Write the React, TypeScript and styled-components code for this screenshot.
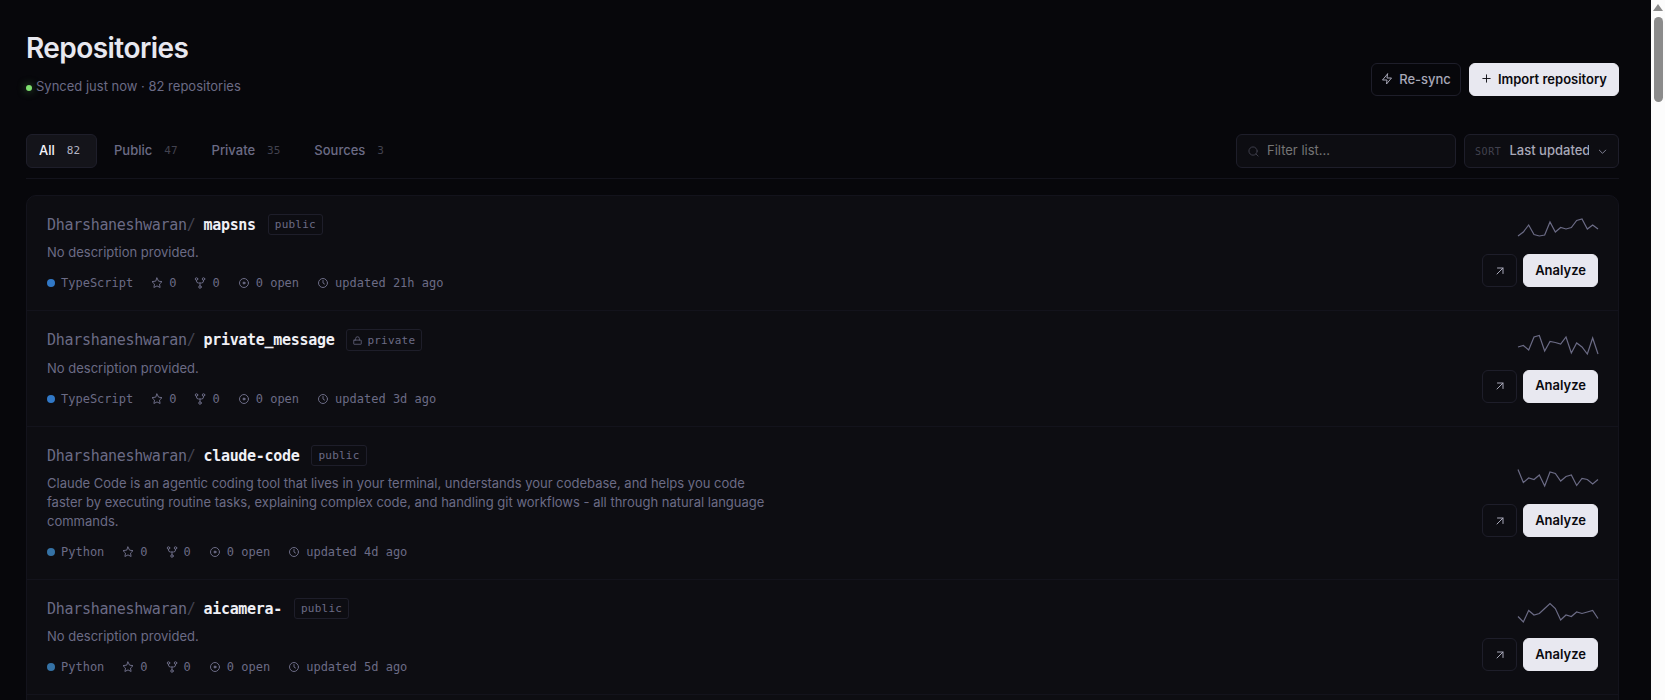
import React from "react";
import styled, { createGlobalStyle, css } from "styled-components";

const sans = `Inter, "Liberation Sans", sans-serif`;
const mono = `"DejaVu Sans Mono", "Liberation Mono", monospace`;

const GlobalStyle = createGlobalStyle`
  *, *::before, *::after { box-sizing: border-box; }
  body { margin: 0; background: #07070b; color: #e8e8f0; font-family: ${sans}; font-size: 13px; }
  button, input, select { font: inherit; margin: 0; }
  h1, h2, p, ul { margin: 0; padding: 0; }
  svg { flex-shrink: 0; }
`;

const Shell = styled.div`
  display: grid;
  grid-template-columns: minmax(0, 1fr) 14px;
  height: 100vh;
  background: #07070b;
`;

const Page = styled.main`
  overflow-y: auto;
  scrollbar-width: none;
  padding: 31px 32px 0 26px;
`;

const ScrollTrack = styled.div`
  display: flex;
  flex-direction: column;
  align-items: center;
  gap: 6px;
  padding-top: 4px;
  background: #fcfcfc;
`;

const ScrollThumb = styled.div`
  width: 9px;
  height: 85px;
  border-radius: 5px;
  background: #8b8b8b;
`;

const Header = styled.header`
  display: flex;
  align-items: flex-end;
  justify-content: space-between;
  margin-bottom: 38px;
`;

const Title = styled.h1`
  font-size: 28px;
  line-height: 34px;
  font-weight: 600;
  letter-spacing: -0.02em;
`;

const SyncStatus = styled.p`
  display: flex;
  align-items: center;
  gap: 4px;
  margin-top: 12px;
  font-size: 13px;
  line-height: 19px;
  color: #6b6b85;
`;

const SyncDot = styled.span`
  width: 6px;
  height: 6px;
  margin-top: 2px;
  border-radius: 50%;
  background: #7ee06f;
  box-shadow: 0 0 8px #7ee06f88;
`;

const Group = styled.div<{ $gap: number }>`
  display: flex;
  align-items: center;
  gap: ${(p) => p.$gap}px;
`;

const Button = styled.button<{ $primary?: boolean }>`
  display: inline-flex;
  align-items: center;
  justify-content: center;
  gap: 6px;
  height: 33px;
  padding: 0 ${(p) => (p.$primary ? 11 : 9)}px 2px;
  border: 1px solid #1e1e2a;
  border-radius: 6px;
  background: transparent;
  color: #a8a8b8;
  font-size: 13px;
  font-weight: 500;
  cursor: pointer;
  ${(p) =>
    p.$primary &&
    css`
      border-color: #e8e8f0;
      background: #e8e8f0;
      color: #0a0a0f;
      font-weight: 600;
    `}
`;

const IconButton = styled(Button)`
  width: 35px;
  padding: 0;
`;

const Toolbar = styled.div`
  display: flex;
  align-items: center;
  justify-content: space-between;
  padding-bottom: 10px;
  border-bottom: 1px solid #13131c;
  margin-bottom: 16px;
`;

const Tab = styled.button<{ $active?: boolean }>`
  display: inline-flex;
  align-items: center;
  gap: 8px;
  height: 34px;
  padding: 0 12px 2px;
  border: 1px solid ${(p) => (p.$active ? "#1e1e2a" : "transparent")};
  border-radius: 6px;
  background: ${(p) => (p.$active ? "#14141a" : "transparent")};
  color: ${(p) => (p.$active ? "#f4f4fa" : "#6b6b85")};
  font-size: 13px;
  font-weight: 500;
  cursor: pointer;
`;

const TabCount = styled.span<{ $active?: boolean }>`
  padding: 0 4px;
  font-family: ${mono};
  font-size: 11px;
  font-weight: 400;
  color: ${(p) => (p.$active ? "#b4b4c4" : "#42424f")};
`;

const Field = styled.label`
  display: flex;
  align-items: center;
  height: 34px;
  padding: 0 11px;
  border: 1px solid #1e1e2a;
  border-radius: 6px;
  background: #0d0d12;
  color: #42424f;
`;

const FilterField = styled(Field)`
  width: 220px;
  gap: 8px;
`;

const FilterInput = styled.input`
  flex: 1;
  min-width: 0;
  padding: 0 0 2px;
  border: 0;
  outline: 0;
  background: transparent;
  color: #e8e8f0;
  font-size: 13px;
  &::placeholder { color: #757575; opacity: 1; }
`;

const SortField = styled(Field)`
  width: 155px;
  gap: 8px;
  padding: 0 10px;
  color: #8a8a9c;
`;

const SortLabel = styled.span`
  font-family: ${mono};
  font-size: 10px;
  letter-spacing: 0.06em;
  color: #42424f;
`;

const SortSelect = styled.select`
  flex: 1;
  min-width: 0;
  padding: 0 0 2px;
  border: 0;
  outline: 0;
  appearance: none;
  background: transparent;
  color: #a8a8b8;
  font-size: 13px;
  font-weight: 500;
`;

const RepoList = styled.ul`
  list-style: none;
  padding-bottom: 24px;
  border: 1px solid #13131c;
  border-radius: 10px 10px 0 0;
  background: #0d0d12;
`;

const RepoRow = styled.li`
  display: flex;
  align-items: center;
  justify-content: space-between;
  gap: 24px;
  padding: 18px 20px;
  border-bottom: 1px solid #13131c;
`;

const RepoHeading = styled.div`
  display: flex;
  align-items: center;
  gap: 12px;
`;

const RepoName = styled.h2`
  font-family: ${mono};
  font-size: 15px;
  line-height: 20px;
  font-weight: 700;
  letter-spacing: -0.02em;
  color: #f0f0f6;
`;

const Owner = styled.span`
  font-weight: 400;
  color: #6b6b85;
`;

const Slash = styled.span`
  margin-right: 8px;
  font-weight: 400;
  color: #42424f;
`;

const Badge = styled.span<{ $private?: boolean }>`
  display: inline-flex;
  align-items: center;
  gap: 5px;
  height: ${(p) => (p.$private ? 22 : 21)}px;
  padding: 0 6px;
  border: 1px solid #1e1e2a;
  border-radius: 3px;
  font-family: ${mono};
  font-size: 11px;
  letter-spacing: 0.02em;
  color: #6b6b85;
`;

const Description = styled.p`
  max-width: 720px;
  margin-top: 8px;
  font-size: 13px;
  line-height: 19px;
  color: #6b6b85;
`;

const Meta = styled.div`
  display: flex;
  align-items: center;
  gap: 18px;
  margin-top: 12px;
  font-family: ${mono};
  font-size: 12px;
  line-height: 18px;
  color: #6b6b85;
`;

const MetaItem = styled.span`
  display: inline-flex;
  align-items: center;
  gap: 6px;
`;

const LanguageDot = styled.span<{ $color: string }>`
  width: 8px;
  height: 8px;
  border-radius: 50%;
  background: ${(p) => p.$color};
`;

const RepoSide = styled.div`
  display: flex;
  flex-direction: column;
  align-items: flex-end;
  gap: 11px;
`;

const SparkSvg = styled.svg`
  display: block;
  overflow: visible;
`;

const iconPaths: Record<string, React.ReactNode> = {
  zap: <path d="M13 2 3 14h9l-1 8 10-12h-9l1-8z" />,
  plus: <path d="M12 4v16M4 12h16" />,
  search: (
    <>
      <circle cx="11" cy="11" r="9" />
      <path d="m22 22-4.500-4.500" />
    </>
  ),
  chevron: <path d="m5 9 7 7 7-7" />,
  star: <path d="M12 2l3.100 6.300 6.900 1-5 4.900 1.200 6.800-6.200-3.200L5.800 21 7 14.200 2 9.300l6.900-1z" />,
  fork: (
    <>
      <circle cx="5" cy="4" r="2.500" />
      <circle cx="19" cy="4" r="2.500" />
      <circle cx="12" cy="20" r="2.500" />
      <path d="M5 6.500v1.500a4 4 0 0 0 4 4h6a4 4 0 0 0 4-4V6.500M12 12v5.500" />
    </>
  ),
  issue: (
    <>
      <circle cx="12" cy="12" r="9" />
      <circle cx="12" cy="12" r="2" fill="currentColor" />
    </>
  ),
  clock: (
    <>
      <circle cx="12" cy="12" r="9" />
      <path d="M12 7v5l3 2" />
    </>
  ),
  lock: (
    <>
      <rect x="2" y="11" width="20" height="11" rx="1" />
      <path d="M7 11V7a5 5 0 0 1 10 0v4" />
    </>
  ),
  arrow: <path d="M6 18 18 6M7 6h11v11" />,
};

function Icon({ name, size }: { name: string; size: number }) {
  return (
    <svg
      width={size}
      height={size}
      viewBox="0 0 24 24"
      fill="none"
      stroke="currentColor"
      strokeWidth={2}
      strokeLinecap="round"
      strokeLinejoin="round"
      overflow="visible"
      aria-hidden="true"
    >
      {iconPaths[name]}
    </svg>
  );
}

function Sparkline({ values }: { values: number[] }) {
  const points = values.map((y, i) => `${(i * 80) / (values.length - 1)},${y}`).join(" ");
  return (
    <SparkSvg width="80" height="24" viewBox="0 0 80 24" aria-hidden="true">
      <polyline points={points} fill="none" stroke="#6b6b85" strokeWidth="1.2" />
    </SparkSvg>
  );
}

interface Repo {
  name: string;
  isPrivate?: boolean;
  description: string;
  language: "TypeScript" | "Python";
  updated: string;
  activity: number[];
}

const languageColors = { TypeScript: "#3178c6", Python: "#3572a5" };

const repos: Repo[] = [
  {
    name: "mapsns",
    description: "No description provided.",
    language: "TypeScript",
    updated: "21h",
    activity: [17, 13, 6, 15.5, 17, 16, 3, 13, 8.5, 10, 8.5, 1.5, 0, 10, 6, 10],
  },
  {
    name: "private_message",
    isPrivate: true,
    description: "No description provided.",
    language: "TypeScript",
    updated: "3d",
    activity: [12, 10.5, 15, 2, 0.5, 16, 6.5, 7.5, 9, 2, 18, 8, 12, 19, 3, 19],
  },
  {
    name: "claude-code",
    description:
      "Claude Code is an agentic coding tool that lives in your terminal, understands your codebase, and helps you code faster by executing routine tasks, explaining complex code, and handling git workflows - all through natural language commands.",
    language: "Python",
    updated: "4d",
    activity: [0.5, 13.5, 9, 10.5, 6, 17, 3, 4.5, 12, 7.5, 6, 16.5, 9.5, 10.5, 15, 10.5],
  },
  {
    name: "aicamera-",
    description: "No description provided.",
    language: "Python",
    updated: "5d",
    activity: [13.5, 19, 7.5, 12, 10.5, 5.5, 0.5, 5.5, 17, 12, 13.5, 9, 10.5, 9, 7.5, 15.5],
  },
];

const tabs = [
  { label: "All", count: 82 },
  { label: "Public", count: 47 },
  { label: "Private", count: 35 },
  { label: "Sources", count: 3 },
];

function RepoItem({ repo }: { repo: Repo }) {
  return (
    <RepoRow>
      <div>
        <RepoHeading>
          <RepoName>
            <Owner>Dharshaneshwaran</Owner>
            <Slash>/</Slash>
            {repo.name}
          </RepoName>
          <Badge $private={repo.isPrivate}>
            {repo.isPrivate && <Icon name="lock" size={9} />}
            {repo.isPrivate ? "private" : "public"}
          </Badge>
        </RepoHeading>
        <Description>{repo.description}</Description>
        <Meta>
          <MetaItem>
            <LanguageDot $color={languageColors[repo.language]} />
            {repo.language}
          </MetaItem>
          <MetaItem>
            <Icon name="star" size={12} />0
          </MetaItem>
          <MetaItem>
            <Icon name="fork" size={12} />0
          </MetaItem>
          <MetaItem>
            <Icon name="issue" size={12} />0 open
          </MetaItem>
          <MetaItem>
            <Icon name="clock" size={12} />
            updated {repo.updated} ago
          </MetaItem>
        </Meta>
      </div>
      <RepoSide>
        <Sparkline values={repo.activity} />
        <Group $gap={6}>
          <IconButton aria-label={`Open ${repo.name}`}>
            <Icon name="arrow" size={12} />
          </IconButton>
          <Button $primary>Analyze</Button>
        </Group>
      </RepoSide>
    </RepoRow>
  );
}

export default function App() {
  const [active, setActive] = React.useState("All");
  return (
    <>
      <GlobalStyle />
      <Shell>
        <Page>
          <Header>
            <div>
              <Title>Repositories</Title>
              <SyncStatus>
                <SyncDot />
                Synced just now · 82 repositories
              </SyncStatus>
            </div>
            <Group $gap={8}>
              <Button>
                <Icon name="zap" size={12} />
                Re-sync
              </Button>
              <Button $primary>
                <Icon name="plus" size={11} />
                Import repository
              </Button>
            </Group>
          </Header>
          <Toolbar>
            <Group $gap={4}>
              {tabs.map((t) => (
                <Tab key={t.label} $active={t.label === active} onClick={() => setActive(t.label)}>
                  {t.label}
                  <TabCount $active={t.label === active}>{t.count}</TabCount>
                </Tab>
              ))}
            </Group>
            <Group $gap={8}>
              <FilterField>
                <Icon name="search" size={11} />
                <FilterInput type="text" placeholder="Filter list..." aria-label="Filter list" />
              </FilterField>
              <SortField>
                <SortLabel>SORT</SortLabel>
                <SortSelect defaultValue="updated">
                  <option value="updated">Last updated</option>
                  <option value="name">Name</option>
                </SortSelect>
                <Icon name="chevron" size={11} />
              </SortField>
            </Group>
          </Toolbar>
          <RepoList>
            {repos.map((r) => (
              <RepoItem key={r.name} repo={r} />
            ))}
          </RepoList>
        </Page>
        <ScrollTrack aria-hidden="true">
          <svg width="10" height="7" viewBox="0 0 10 7">
            <path d="M5 0 10 7H0z" fill="#8b8b8b" />
          </svg>
          <ScrollThumb />
        </ScrollTrack>
      </Shell>
    </>
  );
}
